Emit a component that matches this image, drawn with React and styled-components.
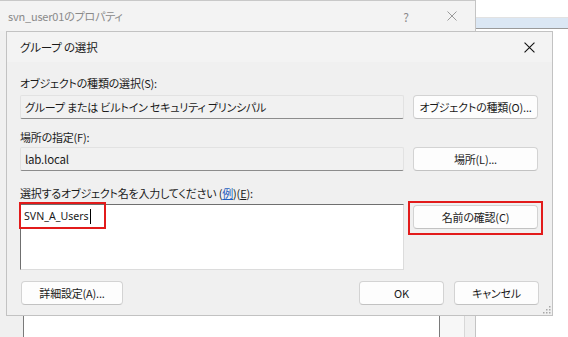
import React from 'react'
import styled, { createGlobalStyle } from 'styled-components'

const GlobalStyle = createGlobalStyle`
  html, body {
    margin: 0;
    padding: 0;
    background: #ffffff;
  }
  * {
    box-sizing: border-box;
  }
`

const Desktop = styled.div`
  position: relative;
  width: 568px;
  height: 337px;
  overflow: hidden;
  background: #ffffff;
  font-family: 'Noto Sans CJK JP', 'Noto Sans', sans-serif;
  font-feature-settings: 'palt';
  font-size: 11px;
  letter-spacing: -0.2px;
  color: #1a1a1a;
`

// window far behind, peeking out on the right
const FarWindow = styled.div`
  position: absolute;
  left: 470px;
  top: 17px;
  width: 120px;
  height: 12px;
  background: #dbe7f4;
  border-top: 1px solid #e2e2e2;
  border-bottom: 1px solid #9a9a9a;
`

const BackWindow = styled.div`
  position: absolute;
  left: 0;
  top: 0;
  width: 476px;
  height: 337px;
  background: #f0f0f0;
  border-right: 1px solid #c4c4c4;
  display: flex;
  flex-direction: column;
`

const BackTitle = styled.div`
  height: 31px;
  display: flex;
  align-items: center;
  padding: 0 0 0 8px;
  background: #f3f3f3;
  border-top: 1px solid #c8c8c8;
  color: #8a8a8a;
  font-size: 11px;
`

const TitleText = styled.span`
  flex: 1;
`

const TitleButton = styled.span`
  width: 46px;
  display: flex;
  justify-content: center;
  font-size: 12px;
  color: ${(p) => p.$color || '#9a9a9a'};
`

const BackBody = styled.div`
  flex: 1;
  display: flex;
  padding: 0 0 0 23px;
`

const BackPanel = styled.div`
  width: 417px;
  margin-top: 280px;
  background: #ffffff;
  border-left: 1px solid #7a7a7a;
  border-right: 1px solid #7a7a7a;
`

const BackStrip = styled.div`
  width: 25px;
  margin-top: 280px;
  background: #f7f7f7;
  border-right: 1px solid #d8d8d8;
`

const Dialog = styled.div`
  position: absolute;
  left: 6px;
  top: 31px;
  width: 547px;
  height: 285px;
  background: #f0f0f0;
  border: 1px solid #c2c2c2;
  display: flex;
  flex-direction: column;
`

const DialogTitle = styled.div`
  height: 30px;
  display: flex;
  align-items: center;
  padding-left: 13px;
  background: #f3f3f3;
  font-size: 11.5px;
  color: #1a1a1a;
`

const DialogBody = styled.div`
  position: relative;
  flex: 1;
  display: flex;
  flex-direction: column;
  padding: 13px 13px 9px 13px;
`

const Label = styled.div`
  height: 16px;
  line-height: 16px;
  margin-top: ${(p) => p.$mt || 0}px;
  margin-bottom: ${(p) => p.$mb || 4}px;
  white-space: nowrap;
`

const Row = styled.div`
  display: flex;
  align-items: flex-start;
  gap: 9px;
`

const ReadField = styled.div`
  width: 384px;
  height: 24px;
  display: flex;
  align-items: center;
  padding-left: 4px;
  background: #f1f1f1;
  border: 1px solid #e2e2e2;
  border-bottom-color: #8c8c8c;
  border-radius: 2px;
  white-space: nowrap;
  font-size: ${(p) => p.$fs || 11}px;
`

const Button = styled.div`
  position: relative;
  width: ${(p) => p.$w || 125}px;
  height: 24px;
  margin-top: ${(p) => p.$mt || 0}px;
  display: flex;
  align-items: center;
  justify-content: center;
  background: #fdfdfd;
  border: 1px solid #d3d3d3;
  border-bottom-color: #c2c2c2;
  border-radius: 4px;
  white-space: nowrap;
  color: #1a1a1a;

  ${(p) =>
    p.$marked &&
    `
    &::after {
      content: '';
      position: absolute;
      top: -5px;
      bottom: -7px;
      left: -6px;
      right: -6px;
      border: 2px solid #e21b1b;
    }
  `}
`

const NameBox = styled.div`
  position: relative;
  width: 384px;
  height: 66px;
  background: #ffffff;
  border: 1px solid #dcdcdc;
  border-top-color: #6f6f6f;
  border-left-color: #6f6f6f;
  padding: 2px 2px;
`

const NameMark = styled.div`
  position: absolute;
  left: -2px;
  top: -3px;
  width: 87px;
  height: 27px;
  border: 2px solid #e21b1b;
`

const NameText = styled.span`
  display: inline-flex;
  align-items: center;
  height: 18px;
  line-height: 18px;
  font-family: 'Noto Sans', sans-serif;
  font-size: 10.6px;
  letter-spacing: 0;
  padding-left: 1px;
`

const Caret = styled.span`
  display: inline-block;
  width: 1px;
  height: 15px;
  background: #000;
  margin-left: 1px;
`

const LinkText = styled.span`
  color: #1f5fbf;
  text-decoration: underline;
`

const Under = styled.span`
  text-decoration: underline;
`

const Footer = styled.div`
  display: flex;
  align-items: center;
  gap: 10px;
  margin-top: 11px;
  padding-left: 1px;
`

const Spacer = styled.div`
  flex: 1;
`

const Grip = styled.svg`
  position: absolute;
  right: 1px;
  bottom: 1px;
`

const CloseIcon = ({ size = 10, color = '#1a1a1a', width = 1 }) => (
  <svg width={size} height={size} viewBox="0 0 10 10">
    <path d="M0.5 0.5 L9.5 9.5 M9.5 0.5 L0.5 9.5" stroke={color} strokeWidth={width} fill="none" />
  </svg>
)

const App = () => {
  return (
    <Desktop>
      <GlobalStyle />
      <FarWindow />
      <BackWindow>
        <BackTitle>
          <TitleText>svn_user01のプロパティ</TitleText>
          <TitleButton $color="#8a8a8a">?</TitleButton>
          <TitleButton>
            <CloseIcon size={10} color="#9a9a9a" />
          </TitleButton>
        </BackTitle>
        <BackBody>
          <BackPanel />
          <BackStrip />
        </BackBody>
      </BackWindow>

      <Dialog>
        <DialogTitle>
          <TitleText>グループ の選択</TitleText>
          <TitleButton>
            <CloseIcon size={11} color="#111" />
          </TitleButton>
        </DialogTitle>
        <DialogBody>
          <Label>オブジェクトの種類の選択(S):</Label>
          <Row>
            <ReadField>グループ または ビルトイン セキュリティ プリンシパル</ReadField>
            <Button>オブジェクトの種類(O)...</Button>
          </Row>

          <Label $mt={10} $mb={2}>場所の指定(F):</Label>
          <Row>
            <ReadField $fs={11.5}>lab.local</ReadField>
            <Button>場所(L)...</Button>
          </Row>

          <Label $mt={14} $mb={3}>
            選択するオブジェクト名を入力してください (<LinkText>例</LinkText>)(<Under>E</Under>):
          </Label>
          <Row>
            <NameBox>
              <NameMark />
              <NameText>
                SVN_A_Users
                <Caret />
              </NameText>
            </NameBox>
            <Button $marked $mt={1}>名前の確認(C)</Button>
          </Row>

          <Footer>
            <Button $w={102}>詳細設定(A)...</Button>
            <Spacer />
            <Button $w={85}>OK</Button>
            <Button $w={85}>キャンセル</Button>
          </Footer>

          <Grip width="8" height="8" viewBox="0 0 8 8">
            <g fill="#a8a8a8">
              <rect x="6" y="0" width="1.5" height="1.5" />
              <rect x="3" y="3" width="1.5" height="1.5" />
              <rect x="6" y="3" width="1.5" height="1.5" />
              <rect x="0" y="6" width="1.5" height="1.5" />
              <rect x="3" y="6" width="1.5" height="1.5" />
              <rect x="6" y="6" width="1.5" height="1.5" />
            </g>
          </Grip>
        </DialogBody>
      </Dialog>
    </Desktop>
  )
}

export default App
